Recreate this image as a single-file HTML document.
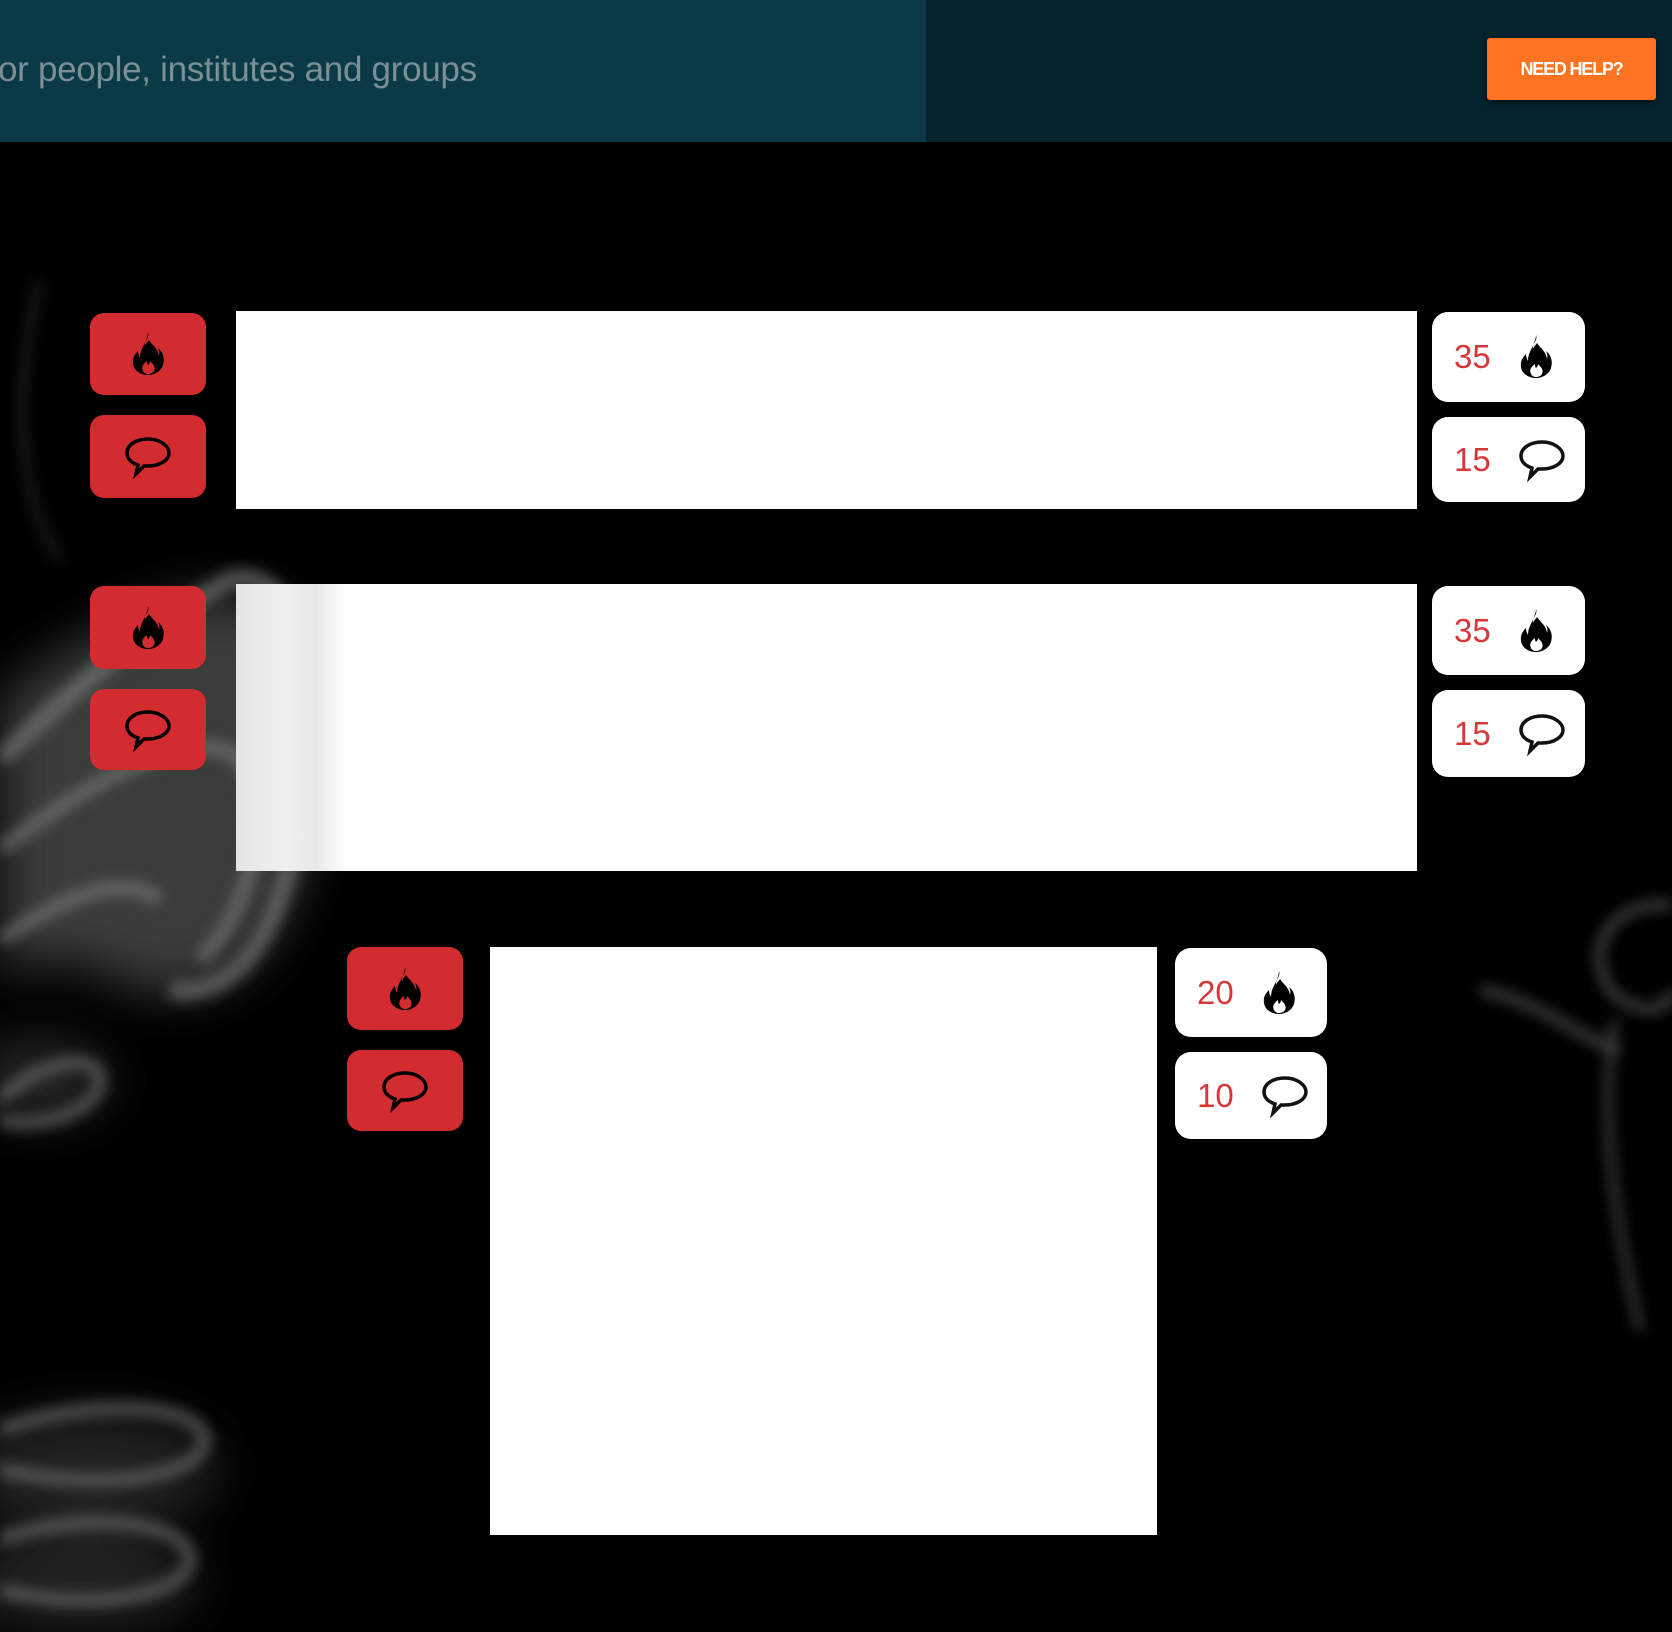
<!DOCTYPE html>
<html><head><meta charset="utf-8"><style>
html,body{margin:0;padding:0;width:1672px;height:1632px;background:#000;overflow:hidden;font-family:"Liberation Sans",sans-serif;}
.abs{position:absolute}
.hdr{left:0;top:0;width:1672px;height:142px;background:#04232d}
.panel{left:0;top:0;width:926px;height:142px;background:#0b3a47}
.srch{left:-2px;top:50px;font-size:35px;color:#7b8f95;letter-spacing:-0.3px;white-space:nowrap}
.help{left:1487px;top:38px;width:169px;height:62px;background:#fd7321;color:#fff;font-weight:bold;font-size:18px;line-height:62px;text-align:center;border-radius:3px;letter-spacing:-1.2px;box-shadow:0 3px 4px rgba(0,0,0,.4)}
.rb{background:#d22b30;border-radius:14px;width:116px;display:flex;align-items:center;justify-content:center}
.wb{background:#fff}
.pill{background:#fff;border-radius:16px;display:flex;align-items:center;box-sizing:border-box;padding-left:22px}
.pill span{color:#d8373a;font-size:33px;width:62px}
</style></head><body>
<svg class="abs" style="left:0;top:0" width="1672" height="1632">
<defs><filter id="b" x="-30%" y="-30%" width="160%" height="160%"><feGaussianBlur stdDeviation="7"/></filter>
<filter id="b2" x="-30%" y="-30%" width="160%" height="160%"><feGaussianBlur stdDeviation="25"/></filter></defs>
<g filter="url(#b2)" fill="#6a6e6a">
<path d="M0 700 C100 620 200 580 260 600 C330 640 330 800 290 900 C250 990 180 1010 120 980 C60 950 20 960 0 980Z" opacity=".55"/>
<ellipse cx="40" cy="1080" rx="70" ry="40" opacity=".35"/>
<ellipse cx="90" cy="1470" rx="130" ry="60" opacity=".3"/>
<ellipse cx="80" cy="1580" rx="120" ry="50" opacity=".3"/>
</g>
<g fill="none" stroke="#8a8e8a" filter="url(#b)" opacity=".55">
<path d="M40 280 C10 400 20 500 60 560" stroke-width="8" opacity=".4"/>
<path d="M0 760 C80 680 160 620 230 580 C300 560 330 700 300 820 C280 930 240 1000 170 990" stroke-width="18"/>
<path d="M0 850 C90 780 200 720 240 760 C270 800 260 900 200 960" stroke-width="14"/>
<path d="M0 940 C60 900 120 870 160 900" stroke-width="14"/>
<path d="M0 1100 C40 1060 100 1050 100 1080 C100 1110 40 1130 0 1120" stroke-width="12"/>
<path d="M0 1430 C80 1400 200 1400 205 1440 C200 1480 100 1490 0 1470" stroke-width="12"/>
<path d="M0 1540 C80 1510 190 1520 190 1560 C185 1600 80 1610 0 1590" stroke-width="12"/>
</g>
<g fill="none" stroke="#9a9a9a" filter="url(#b)" opacity=".45">
<path d="M1672 905 C1620 900 1580 940 1610 990 C1640 1020 1672 1010 1672 990" stroke-width="9"/>
<path d="M1615 1020 C1600 1100 1610 1200 1640 1330" stroke-width="7"/>
<path d="M1480 990 C1540 1000 1580 1040 1620 1050" stroke-width="9"/>
</g>
</svg>
<div class="abs hdr"></div>
<div class="abs panel"></div>
<div class="abs srch">or people, institutes and groups</div>
<div class="abs help">NEED HELP?</div>

<div class="abs wb" style="left:236px;top:311px;width:1181px;height:198px"></div>
<div class="abs wb" style="left:236px;top:584px;width:1181px;height:287px;background:linear-gradient(90deg,#e4e4e4 0,#f0f0f0 50px,#e8e8e8 80px,#fff 110px)"></div>
<div class="abs wb" style="left:490px;top:947px;width:667px;height:588px"></div>

<div class="abs rb" style="left:90px;top:313px;height:82px"><svg width="40" height="48" viewBox="0 0 40 48"><path d="M20 2c2 6-4 8-3 14 1-3 3-4 4-6 3 5 9 8 10 16 1-3 0-6-1-8 5 4 7 10 5 17-2 6-8 10-15 10S6 41 5 34c-1-6 2-10 5-13 0 3 1 5 2 7 0-8 4-12 6-18 1-3 2-5 2-8zm-1 29c-4 3-6 6-4 10 1 2 3 3 5 3s5-1 6-3c2-4-1-7-4-10 0 2-1 3-2 4-1-1-1-3-1-4z" fill="#000"/></svg></div>
<div class="abs rb" style="left:90px;top:415px;height:83px"><svg width="52" height="44" viewBox="0 0 52 44"><path d="M26 4C14 4 5 10 5 18c0 6 5 10 11 12l-2 9 8-8c1 0 3 0 4 0 12 0 21-6 21-13S38 4 26 4z" fill="none" stroke="#000" stroke-width="3.5"/></svg></div>
<div class="abs rb" style="left:90px;top:586px;height:83px"><svg width="40" height="48" viewBox="0 0 40 48"><path d="M20 2c2 6-4 8-3 14 1-3 3-4 4-6 3 5 9 8 10 16 1-3 0-6-1-8 5 4 7 10 5 17-2 6-8 10-15 10S6 41 5 34c-1-6 2-10 5-13 0 3 1 5 2 7 0-8 4-12 6-18 1-3 2-5 2-8zm-1 29c-4 3-6 6-4 10 1 2 3 3 5 3s5-1 6-3c2-4-1-7-4-10 0 2-1 3-2 4-1-1-1-3-1-4z" fill="#000"/></svg></div>
<div class="abs rb" style="left:90px;top:689px;height:81px"><svg width="52" height="44" viewBox="0 0 52 44"><path d="M26 4C14 4 5 10 5 18c0 6 5 10 11 12l-2 9 8-8c1 0 3 0 4 0 12 0 21-6 21-13S38 4 26 4z" fill="none" stroke="#000" stroke-width="3.5"/></svg></div>
<div class="abs rb" style="left:347px;top:947px;height:83px"><svg width="40" height="48" viewBox="0 0 40 48"><path d="M20 2c2 6-4 8-3 14 1-3 3-4 4-6 3 5 9 8 10 16 1-3 0-6-1-8 5 4 7 10 5 17-2 6-8 10-15 10S6 41 5 34c-1-6 2-10 5-13 0 3 1 5 2 7 0-8 4-12 6-18 1-3 2-5 2-8zm-1 29c-4 3-6 6-4 10 1 2 3 3 5 3s5-1 6-3c2-4-1-7-4-10 0 2-1 3-2 4-1-1-1-3-1-4z" fill="#000"/></svg></div>
<div class="abs rb" style="left:347px;top:1050px;height:81px"><svg width="52" height="44" viewBox="0 0 52 44"><path d="M26 4C14 4 5 10 5 18c0 6 5 10 11 12l-2 9 8-8c1 0 3 0 4 0 12 0 21-6 21-13S38 4 26 4z" fill="none" stroke="#000" stroke-width="3.5"/></svg></div>

<div class="abs pill" style="left:1432px;top:312px;width:153px;height:90px"><span>35</span><svg width="40" height="50" viewBox="0 0 40 48"><path d="M20 2c2 6-4 8-3 14 1-3 3-4 4-6 3 5 9 8 10 16 1-3 0-6-1-8 5 4 7 10 5 17-2 6-8 10-15 10S6 41 5 34c-1-6 2-10 5-13 0 3 1 5 2 7 0-8 4-12 6-18 1-3 2-5 2-8zm-1 29c-4 3-6 6-4 10 1 2 3 3 5 3s5-1 6-3c2-4-1-7-4-10 0 2-1 3-2 4-1-1-1-3-1-4z" fill="#000"/></svg></div>
<div class="abs pill" style="left:1432px;top:417px;width:153px;height:85px"><span>15</span><svg width="52" height="44" viewBox="0 0 52 44"><path d="M26 4C14 4 5 10 5 18c0 6 5 10 11 12l-2 9 8-8c1 0 3 0 4 0 12 0 21-6 21-13S38 4 26 4z" fill="none" stroke="#111" stroke-width="3.5"/></svg></div>
<div class="abs pill" style="left:1432px;top:586px;width:153px;height:89px"><span>35</span><svg width="40" height="50" viewBox="0 0 40 48"><path d="M20 2c2 6-4 8-3 14 1-3 3-4 4-6 3 5 9 8 10 16 1-3 0-6-1-8 5 4 7 10 5 17-2 6-8 10-15 10S6 41 5 34c-1-6 2-10 5-13 0 3 1 5 2 7 0-8 4-12 6-18 1-3 2-5 2-8zm-1 29c-4 3-6 6-4 10 1 2 3 3 5 3s5-1 6-3c2-4-1-7-4-10 0 2-1 3-2 4-1-1-1-3-1-4z" fill="#000"/></svg></div>
<div class="abs pill" style="left:1432px;top:690px;width:153px;height:87px"><span>15</span><svg width="52" height="44" viewBox="0 0 52 44"><path d="M26 4C14 4 5 10 5 18c0 6 5 10 11 12l-2 9 8-8c1 0 3 0 4 0 12 0 21-6 21-13S38 4 26 4z" fill="none" stroke="#111" stroke-width="3.5"/></svg></div>
<div class="abs pill" style="left:1175px;top:948px;width:152px;height:89px"><span>20</span><svg width="40" height="50" viewBox="0 0 40 48"><path d="M20 2c2 6-4 8-3 14 1-3 3-4 4-6 3 5 9 8 10 16 1-3 0-6-1-8 5 4 7 10 5 17-2 6-8 10-15 10S6 41 5 34c-1-6 2-10 5-13 0 3 1 5 2 7 0-8 4-12 6-18 1-3 2-5 2-8zm-1 29c-4 3-6 6-4 10 1 2 3 3 5 3s5-1 6-3c2-4-1-7-4-10 0 2-1 3-2 4-1-1-1-3-1-4z" fill="#000"/></svg></div>
<div class="abs pill" style="left:1175px;top:1052px;width:152px;height:87px"><span>10</span><svg width="52" height="44" viewBox="0 0 52 44"><path d="M26 4C14 4 5 10 5 18c0 6 5 10 11 12l-2 9 8-8c1 0 3 0 4 0 12 0 21-6 21-13S38 4 26 4z" fill="none" stroke="#111" stroke-width="3.5"/></svg></div>
</body></html>
